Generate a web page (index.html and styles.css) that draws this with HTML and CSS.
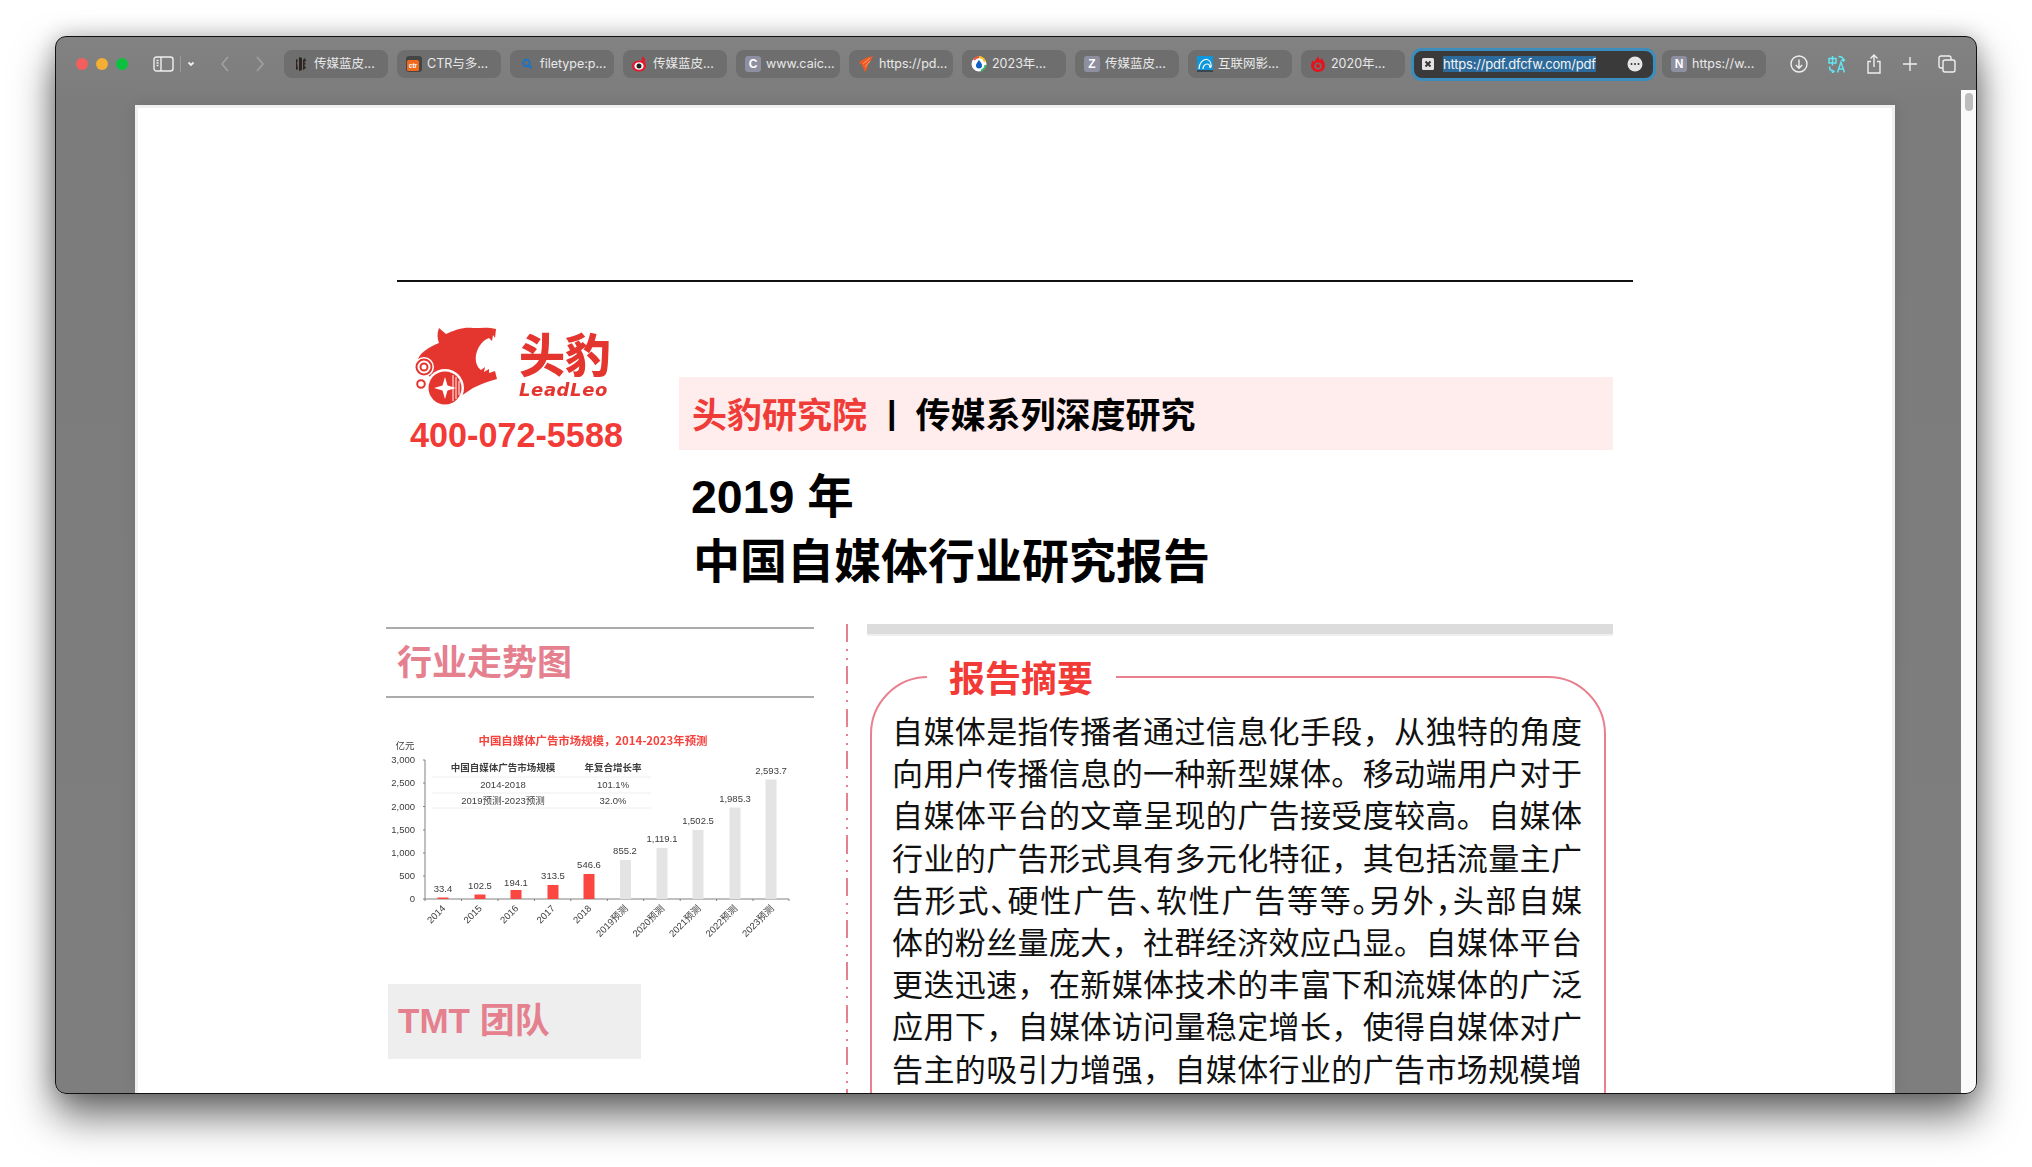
FILE: index.html
```html
<!DOCTYPE html>
<html lang="zh">
<head>
<meta charset="utf-8">
<title>2019年中国自媒体行业研究报告</title>
<link rel="stylesheet" href="styles.css">
</head>
<body>
<div class="window">
  <header class="toolbar">
    <div class="traffic"><i class="dot red"></i><i class="dot yellow"></i><i class="dot green"></i></div>
    <svg class="ic-sidebar" width="42" height="16" viewBox="0 0 42 16"><rect x="1" y="1" width="19" height="14" rx="2.5" class="st"/><path d="M8 1v14M3.5 4.5h2M3.5 7h2M3.5 9.500h2" class="st"/><path d="M27.500 0v16" class="st dim"/><path d="M35.500 6.500l2.500 2.500 2.500-2.500" class="st thick"/></svg>
    <svg class="ic-nav" width="52" height="16" viewBox="0 0 52 16"><path d="M8 1L2 8l6 7M37 1l6 7-6 7" class="st nav"/></svg>
    <div class="tabs">
      <div class="tab"><svg class="fav" viewBox="0 0 16 16"><path d="M3 3l2 1-1 3 1 6-2 1zM6 1l3 1v12l-3 1zM10 4l2-2 1 3-2 1 2 2-2 1 2 3-3 2z" fill="#2e2523"/></svg><span>传媒蓝皮...</span></div>
      <div class="tab"><svg class="fav" viewBox="0 0 16 16"><rect width="16" height="16" rx="3" fill="#454545"/><rect x="1" y="4" width="12" height="11" rx="1.500" fill="#f0691d"/><text x="7" y="12" class="fav-ctr">ctr</text></svg><span>CTR与多...</span></div>
      <div class="tab"><svg class="fav" viewBox="0 0 16 16"><circle cx="7.500" cy="7" r="3.300" fill="none" stroke="#1b74c4" stroke-width="2"/><path d="M10 9.500l2.500 3" stroke="#1b74c4" stroke-width="2"/></svg><span>filetype:p...</span></div>
      <div class="tab"><svg class="fav" viewBox="0 0 16 16"><path d="M9 6c1-2 .5-4 2-6 0 2 1.500 1.500 2 3 .5 1-.5 3 .5 5z" fill="#e8192c"/><ellipse cx="7" cy="10" rx="7" ry="5.500" fill="#e8192c"/><ellipse cx="7" cy="10" rx="4.600" ry="3.800" fill="#fff"/><circle cx="7" cy="10" r="2.500" fill="#222"/></svg><span>传媒蓝皮...</span></div>
      <div class="tab"><b class="letter">C</b><span>www.caic...</span></div>
      <div class="tab"><svg class="fav" viewBox="0 0 16 16"><path d="M15 0C10 1 4 3 1 7l3 2 3 7c2-2 3-6 3-8 2-2 4-5 5-8z" fill="#ee5a24"/><path d="M5 8l7-6M7 11l5-6" stroke="#f7a072" stroke-width="1"/></svg><span>https://pd...</span></div>
      <div class="tab"><svg class="fav" viewBox="0 0 16 16"><circle cx="8" cy="8" r="6.500" fill="#fff" stroke="#fff" stroke-width="2"/><path d="M3 4A7 7 0 0 1 8 1" stroke="#ef4d3c" stroke-width="2" fill="none"/><path d="M8 1a7 7 0 0 1 6 5" stroke="#f6c21c" stroke-width="2" fill="none"/><path d="M14.500 9A7 7 0 0 1 10 14.700" stroke="#35b36b" stroke-width="2" fill="none"/><path d="M8 4c2 2.500 3 4 3 5.500a3 3 0 0 1-6 0C5 8 6 6.500 8 4z" fill="#0f5fc4"/></svg><span>2023年...</span></div>
      <div class="tab"><b class="letter">Z</b><span>传媒蓝皮...</span></div>
      <div class="tab"><svg class="fav" viewBox="0 0 16 16"><rect width="16" height="16" fill="#0e97dc"/><rect y="14" width="16" height="2" fill="#3b4650"/><path d="M2 13C2 7 6 3 10 3.500c3 .5 4.500 4 4 8M6 13c0-3 2-5 4-5s3 2 3 4" fill="none" stroke="#fff" stroke-width="1.200"/></svg><span>互联网影...</span></div>
      <div class="tab"><svg class="fav" viewBox="0 0 16 16"><path d="M8 0c1 2 1 3 2 4 1-1 1-1 1-2 2 2 4 4 4 8a7 6 0 0 1-14 0c0-3 1-4 2-6 0 1 .5 2 1 2 1-2 3-3 4-6z" fill="#e3141e"/><circle cx="8" cy="10" r="3.600" fill="#6e6e6e"/><circle cx="8" cy="10" r="2" fill="#e3141e"/></svg><span>2020年...</span></div>
      <div class="tab active">
        <svg class="fav-x" viewBox="0 0 12 12"><rect width="12" height="12" rx="1.500" fill="#e4e4e4"/><path d="M3.500 3.500l5 5M8.500 3.500l-5 5" stroke="#333" stroke-width="1.800"/></svg>
        <span class="url">https://pdf.dfcfw.com/pdf</span>
        <svg class="more" viewBox="0 0 16 16"><circle cx="8" cy="8" r="7.500" fill="#e6e6e6"/><circle cx="4.500" cy="8" r="1" fill="#333"/><circle cx="8" cy="8" r="1" fill="#333"/><circle cx="11.500" cy="8" r="1" fill="#333"/></svg>
      </div>
      <div class="tab"><b class="letter">N</b><span>https://w...</span></div>
    </div>
    <div class="actions">
      <svg width="18" height="18" viewBox="0 0 18 18"><circle cx="9" cy="9" r="8" class="st"/><path d="M9 4.500v8.500M5.800 10L9 13.200 12.200 10" class="st"/></svg>
      <svg width="18" height="18" viewBox="0 0 18 18"><g class="cy"><path d="M1 3.500h7v4.500H1zM4.500 1v9.500"/><path d="M1.500 11.500c0 3 1.500 4.500 4 4.500M4 15l2 1.500L4 18"/><path d="M9.500 17.500L13 7l3.500 10.500M10.700 14h4.600"/><path d="M10.500 1.500c3 0 5 1 5 4M13.500 4.500l2 1.500 1.500-1.500"/></g></svg>
      <svg width="16" height="20" viewBox="0 0 16 20"><path d="M8 13V1M4.500 4.500L8 1l3.500 3.500M5 7.500H2v11.500h12V7.500h-3" class="st"/></svg>
      <svg width="16" height="16" viewBox="0 0 16 16"><path d="M8 1v14M1 8h14" class="st"/></svg>
      <svg width="18" height="18" viewBox="0 0 18 18"><rect x="5" y="5" width="12" height="12" rx="2" class="st"/><path d="M5 13H3a2 2 0 0 1-2-2V3a2 2 0 0 1 2-2h8a2 2 0 0 1 2 2v2" class="st"/></svg>
    </div>
  </header>

  <main class="page">
    <div class="rule"></div>
    <section class="head">
      <div class="brand">
        <svg class="logo" width="200" height="100" viewBox="0 -20 200 100">
          <path d="M24 2L31 8C40 4 48 1 58 2C66 2 74 1 81 3L80 12L78 9L77 15L74 12C68 14 63 20 61 29C60 36 62 41 66 44L70 41L69 46L74 43L74 47L80 45L82 53C74 55 66 58 58 62L46 70L20 55L8 45L3 33C6 26 14 21 24 17C22 12 22 7 24 2Z" class="lg"/>
          <circle cx="9" cy="41" r="10" fill="#fff"/>
          <circle cx="9" cy="41" r="7.500" class="coin"/><circle cx="9" cy="41" r="3.500" class="coin"/>
          <circle cx="6" cy="58" r="3.800" class="coin"/>
          <circle cx="30" cy="62" r="19" fill="#fff"/>
          <circle cx="30" cy="62" r="16.500" class="lg"/>
          <path d="M30 51l2.500 8.500L41 62l-8.500 2.500L30 73l-2.500-8.500L19 62l8.500-2.500z" fill="#fff"/>
          <path d="M38 49v26M41 51v22M44 55v14" stroke="#fff" stroke-width="1" fill="none"/>
          <text x="104" y="46" class="logo-cn">头豹</text>
          <text x="104" y="70" class="logo-en">LeadLeo</text>
        </svg>
        <div class="phone">400-072-5588</div>
      </div>
      <div class="titles">
        <div class="band"><span class="band-red">头豹研究院</span><span class="band-sep">|</span><span>传媒系列深度研究</span></div>
        <div class="title-year">2019 年</div>
        <h1 class="title-main">中国自媒体行业研究报告</h1>
      </div>
    </section>

    <section class="columns">
      <aside class="left">
        <h2 class="trend">行业走势图</h2>
        <svg class="chart" width="427" height="235" viewBox="386 715 427 235">
          <text x="593" y="745" class="c-title">中国自媒体广告市场规模，2014-2023年预测</text>
          <text x="405" y="749" class="c-t mid">亿元</text>
          <g class="c-t end">
            <text x="415" y="763">3,000</text><text x="415" y="786">2,500</text><text x="415" y="810">2,000</text><text x="415" y="833">1,500</text><text x="415" y="856">1,000</text><text x="415" y="879">500</text><text x="415" y="902">0</text>
          </g>
          <path d="M425 760V899H789M423 760h2M423 783h2M423 806.500h2M423 830h2M423 853h2M423 876h2M423 899h2M425 899v2M461.500 899v2M498 899v2M534.400 899v2M570.800 899v2M607.300 899v2M643.700 899v2M680.200 899v2M716.600 899v2M753 899v2M789 899v2" class="axis"/>
          <path d="M432 777H651M432 793H651M432 808H651" class="tline"/>
          <g class="c-t mid">
            <text x="503" y="771" class="bold">中国自媒体广告市场规模</text><text x="613" y="771" class="bold">年复合增长率</text>
            <text x="503" y="788">2014-2018</text><text x="613" y="788">101.1%</text>
            <text x="503" y="804">2019预测-2023预测</text><text x="613" y="804">32.0%</text>
          </g>
          <g class="bar-r">
            <rect x="437.500" y="897.500" width="11" height="1.500"/><rect x="474.500" y="894.500" width="11" height="4.500"/><rect x="510.500" y="890" width="11" height="9"/><rect x="547.500" y="885" width="11" height="14"/><rect x="583.500" y="874" width="11" height="25"/>
          </g>
          <g class="bar-g">
            <rect x="620" y="860" width="11" height="39"/><rect x="656.500" y="848" width="11" height="51"/><rect x="692.500" y="830" width="11" height="69"/><rect x="729.500" y="807.500" width="11" height="91.500"/><rect x="765.500" y="779.500" width="11" height="119.500"/>
          </g>
          <g class="c-t mid">
            <text x="443" y="892">33.4</text><text x="480" y="889">102.5</text><text x="516" y="886">194.1</text><text x="553" y="879">313.5</text><text x="589" y="868">546.6</text><text x="625" y="854">855.2</text><text x="662" y="842">1,119.1</text><text x="698" y="824">1,502.5</text><text x="735" y="802">1,985.3</text><text x="771" y="774">2,593.7</text>
          </g>
          <g class="c-t end">
            <text transform="translate(446 909) rotate(-45)">2014</text><text transform="translate(482.500 909) rotate(-45)">2015</text><text transform="translate(519 909) rotate(-45)">2016</text><text transform="translate(555.500 909) rotate(-45)">2017</text><text transform="translate(592 909) rotate(-45)">2018</text><text transform="translate(628.500 909) rotate(-45)">2019预测</text><text transform="translate(665 909) rotate(-45)">2020预测</text><text transform="translate(701.500 909) rotate(-45)">2021预测</text><text transform="translate(738 909) rotate(-45)">2022预测</text><text transform="translate(774.500 909) rotate(-45)">2023预测</text>
          </g>
        </svg>
        <div class="team">TMT 团队</div>
      </aside>
      <div class="divider"></div>
      <article class="right">
        <div class="greybar"></div>
        <div class="abstract">
          <h2 class="abstract-title">报告摘要</h2>
          <p class="line">自媒体是指传播者通过信息化手段，从独特的角度</p>
          <p class="line">向用户传播信息的一种新型媒体。移动端用户对于</p>
          <p class="line">自媒体平台的文章呈现的广告接受度较高。自媒体</p>
          <p class="line">行业的广告形式具有多元化特征，其包括流量主广</p>
          <p class="line tight">告形式、硬性广告、软性广告等等。另外，头部自媒</p>
          <p class="line">体的粉丝量庞大，社群经济效应凸显。自媒体平台</p>
          <p class="line">更迭迅速，在新媒体技术的丰富下和流媒体的广泛</p>
          <p class="line">应用下，自媒体访问量稳定增长，使得自媒体对广</p>
          <p class="line">告主的吸引力增强，自媒体行业的广告市场规模增</p>
        </div>
      </article>
    </section>
  </main>
  <div class="scrollbar"><i class="thumb"></i></div>
</div>
</body>
</html>
```
FILE: styles.css
```css
* { box-sizing: border-box; }
html, body { margin: 0; height: 100%; }
body {
  width: 2032px; height: 1167px; overflow: hidden;
  padding: 36px 55px 73px;
  background: #fff;
  font-family: "Liberation Sans", "Noto Sans CJK SC", sans-serif;
}
.window {
  position: relative;
  height: 100%;
  display: flex; flex-direction: column;
  background: linear-gradient(#828282, #7c7c7c 68px, #7e7e7e);
  border: 1px solid #111;
  border-radius: 11px;
  overflow: clip;
  box-shadow: 0 22px 42px rgba(0,0,0,.58), 0 0 22px rgba(0,0,0,.22);
}
.toolbar {
  flex: none; height: 68px;
  display: flex; align-items: flex-start;
  padding: 13px 0 0 20px;
}
.traffic { display: flex; gap: 8px; margin-top: 8px; }
.dot { width: 12px; height: 12px; border-radius: 50%; display: block; }
.red { background: #f25f5c; }
.yellow { background: #f4ae33; }
.green { background: #0cc13f; }
.st { fill: none; stroke: #efefef; stroke-width: 1.400; }
.st.dim { stroke: #9a9a9a; stroke-width: 1; }
.st.thick { stroke-width: 1.800; }
.st.nav { stroke: #a2a2a2; stroke-width: 1.500; }
.cy { fill: none; stroke: #62e6f2; stroke-width: 1.500; }
.ic-sidebar { margin: 6px 0 0 25px; flex: none; }
.ic-nav { margin: 6px 0 0 25px; flex: none; }
.tabs { display: flex; gap: 9px; margin: 0 0 0 12px; flex: none; align-items: center; height: 28px; }
.tab {
  width: 104px; height: 28px;
  background: #6e6e6e; border-radius: 8px;
  display: flex; align-items: center;
  padding-left: 9px; gap: 5px;
  color: #e9e9e9; font: 12.500px/16px "Inter", "Noto Sans CJK SC", sans-serif;
  white-space: nowrap;
  flex: none;
}
.fav { width: 16px; height: 16px; flex: none; }
.fav-ctr { font: bold 6.500px "Liberation Sans", sans-serif; fill: #fff; text-anchor: middle; }
.letter {
  width: 16px; height: 16px; flex: none;
  background: #8e8fa0; border-radius: 3px;
  color: #fff; font: bold 12px/17px "Liberation Sans", sans-serif; text-align: center;
}
.tab.active {
  width: 245px; height: 33px;
  margin: 0 -3px;
  background: #3a3a3a;
  border: 3px solid #3b8dbd; border-radius: 11px;
  padding-left: 8px; gap: 9px;
}
.fav-x { width: 12px; height: 12px; flex: none; }
.url {
  width: 153px; height: 16px; flex: none;
  background: #2c6a9c; color: #f4f4f4;
  font: 13px/16px "Inter", sans-serif; letter-spacing: -.2px;
  overflow: hidden;
  white-space: nowrap;
}
.more { width: 16px; height: 16px; flex: none; margin-left: 22px; }
.actions { display: flex; align-items: center; gap: 20px; margin-left: 24px; height: 28px; flex: none; }

.page {
  flex: 1; min-height: 0;
  margin: 0 81px 0 79px;
  background: #fff;
  border: 3px solid #f0f0f0; border-bottom: 0;
  box-shadow: 0 0 14px rgba(0,0,0,.1);
  padding: 172px 0 0 248px;
  display: flex; flex-direction: column;
  overflow: hidden;
}
.rule { height: 2px; background: #111; margin-left: 11px; width: 1236px; flex: none; }
.head { display: flex; height: 342px; flex: none; }
.brand { width: 293px; flex: none; padding: 24px 0 0 24px; }
.logo { display: block; margin-left: 5px; filter: blur(.3px); }
.lg { fill: #e5352f; }
.coin { fill: none; stroke: #e5352f; stroke-width: 2; }
.logo-cn { font: 900 46px "Noto Sans CJK SC", sans-serif; fill: #e5352f; }
.logo-en { font: italic bold 18px "DejaVu Sans", sans-serif; fill: #e5352f; letter-spacing: .6px; }
.phone { margin-top: 9px; font-size: 34.200px; line-height: 40px; font-weight: 700; color: #f23a36; }
.titles { flex: 1; padding-top: 95px; width: 934px; }
.band {
  width: 934px; height: 73px;
  background: #ffeded;
  display: flex; align-items: center;
  padding: 0 0 2px 13px;
  font-size: 35px; font-weight: 700; color: #000;
}
.band-red { color: #f03c38; }
.band-sep { margin: 0 19px 0 20px; font-family: "Liberation Sans", sans-serif; font-size: 34px; }
.title-year { margin: 15px 0 0 12px; font-size: 46.500px; line-height: 65px; font-weight: 700; color: #000; }
.title-main { margin: -1px 0 0 14px; font-size: 47px; line-height: 65px; font-weight: 700; color: #000; white-space: nowrap; }

.columns { flex: 1; min-height: 0; display: flex; align-items: stretch; overflow: hidden; }
.left { width: 428px; flex: none; padding-top: 3px; }
.trend {
  margin: 0; height: 71px;
  border-top: 2px solid #ababab; border-bottom: 2px solid #ababab;
  padding-left: 11px;
  font-size: 35px; line-height: 68px; font-weight: 700; color: #e5808f;
}
.chart { display: block; margin-top: 17px; filter: blur(.35px); }
.c-title { font: bold 11.400px "Noto Sans CJK SC", sans-serif; fill: #f6423d; text-anchor: middle; }
.c-t { font: 9.500px "Liberation Sans", "Noto Sans CJK SC", sans-serif; fill: #3c3c3c; }
.mid { text-anchor: middle; }
.end { text-anchor: end; }
.bold { font-weight: 700; font-size: 9.500px; }
.axis { fill: none; stroke: #808080; stroke-width: 1; }
.tline { fill: none; stroke: #eee; stroke-width: 1; }
.bar-r { fill: #fb4641; }
.bar-g { fill: #e4e4e4; }
.team {
  width: 253px; height: 75px; margin: 34px 0 0 2px;
  background: #eee;
  padding-left: 10px;
  font-size: 35px; line-height: 73px; font-weight: 700; color: #e5808f;
}
.divider {
  width: 2px; flex: none; margin: 0 19px 0 32px;
  background: repeating-linear-gradient(#e5808f 0 18px, transparent 18px 25px, #e5808f 25px 27px, transparent 27px 34px, #e5808f 34px 36px, transparent 36px 42.300px);
}
.right { width: 746px; flex: none; }
.greybar { height: 12px; background: #dcdcdc; border-bottom: 2px solid #efefef; }
.abstract {
  position: relative;
  width: 736px; margin: 40px 0 0 3px;
  border: 2px solid #e8808f; border-radius: 58px 58px 0 0;
  padding: 34px 22px 40px 20px;
}
.abstract-title {
  position: absolute; left: 55px; top: -21px;
  margin: 0; padding: 0 23px 0 22px;
  background: #fff;
  font-size: 36px; line-height: 46px; font-weight: 700; color: #f23a36;
  white-space: nowrap;
}
.line {
  margin: 0;
  font-size: 31px; line-height: 42.200px; color: #111;
  text-align: justify; text-align-last: justify;
  white-space: nowrap;
}
.tight { font-feature-settings: "halt"; }
.scrollbar {
  position: absolute; right: 0; top: 53px; bottom: 0; width: 15px;
  background: #fafafa;
}
.thumb { display: block; width: 8px; height: 18px; margin: 3px 0 0 4px; background: #bdbdbd; border-radius: 4px; }
```
